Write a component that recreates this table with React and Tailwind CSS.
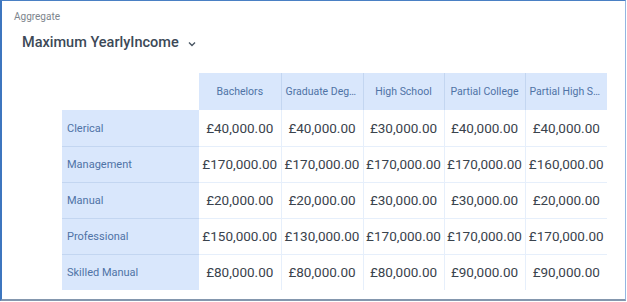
import React from "react";

const COLUMNS = ["Bachelors", "Graduate Degree", "High School", "Partial College", "Partial High School"];

const ROWS = [
  { label: "Clerical", values: ["£40,000.00", "£40,000.00", "£30,000.00", "£40,000.00", "£40,000.00"] },
  { label: "Management", values: ["£170,000.00", "£170,000.00", "£170,000.00", "£170,000.00", "£160,000.00"] },
  { label: "Manual", values: ["£20,000.00", "£20,000.00", "£30,000.00", "£30,000.00", "£20,000.00"] },
  { label: "Professional", values: ["£150,000.00", "£130,000.00", "£170,000.00", "£170,000.00", "£170,000.00"] },
  { label: "Skilled Manual", values: ["£80,000.00", "£80,000.00", "£80,000.00", "£90,000.00", "£90,000.00"] },
];

export default function App() {
  return (
    <div className="w-[627px] h-[302px] bg-white overflow-hidden" style={{ fontFamily: "Roboto, 'Liberation Sans', sans-serif" }}>
      <div className="w-[626px] h-[301px] border-l-2 border-t border-r border-b-2 border-l-[#3d76bf] border-t-[#4a80c4] border-r-[#93b6e2] border-b-[#8497ae]">
        {/* Header */}
        <div className="pl-[12px] pt-[10px] text-[10px] leading-[12px] text-[#7d858d]">Aggregate</div>
        <div className="pl-[20px] pt-[10px] flex items-center gap-[8px]">
          <span className="text-[14.5px] leading-[20px] font-medium text-[#3c4957]">Maximum YearlyIncome</span>
          <svg width="10" height="10" viewBox="0 0 10 10" className="mt-[1px]">
            <path d="M2 3.5 L5 6.5 L8 3.5" fill="none" stroke="#4a5663" strokeWidth="1.4" />
          </svg>
        </div>

        {/* Pivot table */}
        <div className="pl-[60px] pt-[20px]">
          <table className="border-collapse table-fixed">
            <colgroup>
              <col className="w-[137px]" />
              <col className="w-[82px]" />
              <col className="w-[82px]" />
              <col className="w-[81px]" />
              <col className="w-[81px]" />
              <col className="w-[81px]" />
            </colgroup>
            <thead>
              <tr className="h-[37px]">
                <th className="bg-white" />
                {COLUMNS.map((c, i) => (
                  <th
                    key={c}
                    className={`bg-[#d9e7fc] px-[4px] text-[10.5px] font-normal text-[#4f73a6] text-center overflow-hidden whitespace-nowrap text-ellipsis max-w-[82px] ${i > 0 ? "border-l border-[#c3d6f1]" : ""}`}
                  >
                    {c}
                  </th>
                ))}
              </tr>
            </thead>
            <tbody>
              {ROWS.map((row, r) => (
                <tr key={row.label} className="h-[36px]">
                  <td className={`bg-[#d9e7fc] pl-[5px] pt-[2px] text-[11px] text-[#4f73a6] ${r > 0 ? "border-t border-[#c3d6f1]" : ""}`}>
                    {row.label}
                  </td>
                  {row.values.map((v, i) => (
                    <td
                      key={i}
                      className={`text-center text-[13.5px] text-[#3a434d] whitespace-nowrap ${i > 0 ? "border-l border-[#e6effb]" : ""} ${r > 0 ? "border-t border-t-[#e6effb]" : ""}`}
                    >
                      {v}
                    </td>
                  ))}
                </tr>
              ))}
            </tbody>
          </table>
        </div>
      </div>
    </div>
  );
}
